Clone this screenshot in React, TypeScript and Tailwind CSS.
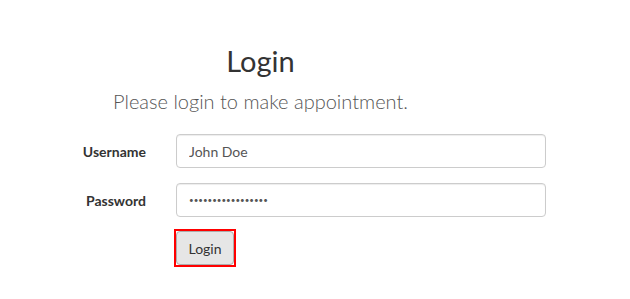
import React from "react";

const font = { fontFamily: '"Lato", "Open Sans", "Liberation Sans", sans-serif' };

export default function App() {
  return (
    <div className="min-h-[299px] w-[630px] bg-white text-[#333]" style={font}>
      <div className="w-[521px] pt-[41px] text-center">
        <h1 className="text-[29px] leading-[40px] font-normal text-[#333]">Login</h1>
        <h3 className="mt-[7px] text-[20px] leading-[26px] font-light text-[#555]">
          Please login to make appointment.
        </h3>
      </div>

      <form className="mt-[20px] flex flex-col">
        <div className="flex items-center">
          <label className="w-[146px] text-right text-[14px] font-bold text-[#333]">Username</label>
          <input
            type="text"
            defaultValue="John Doe"
            className="ml-[30px] h-[34px] w-[370px] rounded-[4px] border border-[#ccc] px-[12px] text-[14px] text-[#555] shadow-[inset_0_1px_1px_rgba(0,0,0,0.075)] outline-none"
          />
        </div>
        <div className="mt-[15px] flex items-center">
          <label className="w-[146px] text-right text-[14px] font-bold text-[#333]">Password</label>
          <input
            type="password"
            defaultValue="ThisIsNotAPasswor"
            className="ml-[30px] h-[34px] w-[370px] rounded-[4px] border border-[#ccc] px-[12px] text-[8px] text-[#555] shadow-[inset_0_1px_1px_rgba(0,0,0,0.075)] outline-none"
          />
        </div>
        <div className="mt-[12px] flex pl-[174px]">
          <div className="border-2 border-[#f00]">
            <button
              type="button"
              className="h-[34px] w-[58px] rounded-[4px] border border-[#adadad] bg-[#e6e6e6] text-[14px] text-[#333]"
            >
              Login
            </button>
          </div>
        </div>
      </form>
    </div>
  );
}
